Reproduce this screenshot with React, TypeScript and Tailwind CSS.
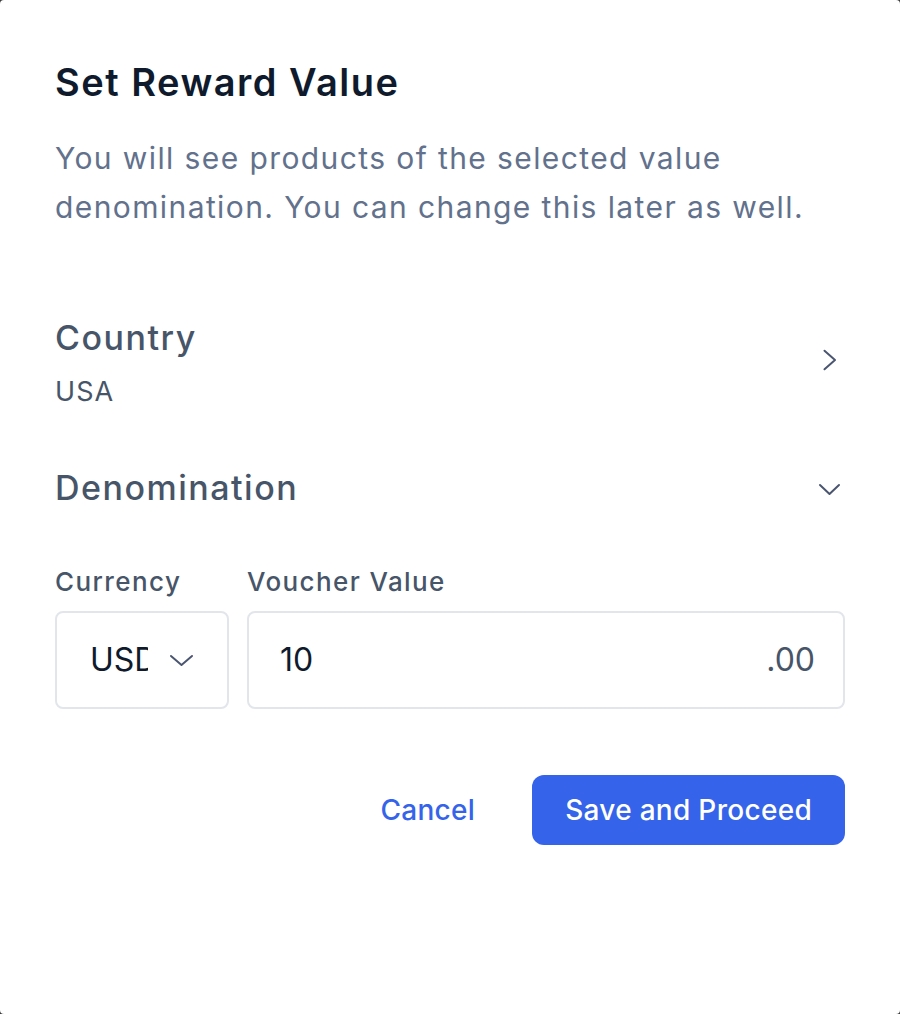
import React from 'react';

const ChevronRight = () => (
  <svg width="24" height="24" viewBox="0 0 24 24" fill="none" className="text-[#4a5670]">
    <path d="M6.5 2.7 L17 12 L6.5 21.3" stroke="currentColor" strokeWidth="2" strokeLinecap="round" strokeLinejoin="round" />
  </svg>
);

const ChevronDown = ({ w = 20, h = 12 }: { w?: number; h?: number }) => (
  <svg width={w + 4} height={h + 4} viewBox={`0 0 ${w + 4} ${h + 4}`} fill="none" className="text-[#4a5670]">
    <path d={`M2 2 L${w / 2 + 2} ${h + 1} L${w + 2} 2`} stroke="currentColor" strokeWidth="2" strokeLinecap="round" strokeLinejoin="round" />
  </svg>
);

export default function App() {
  return (
    <div className="min-h-[1014px] bg-[#3a3a3a]" style={{ fontFamily: 'Inter, "Noto Sans", sans-serif' }}>
      <div className="min-h-[1014px] bg-white rounded-[4px] px-[55px] pt-[59px]">
        <h1 className="text-[38px] leading-[46px] font-semibold text-[#0f1b2d] tracking-[1.5px]">Set Reward Value</h1>
        <p className="mt-[29px] text-[30px] leading-[49px] text-[#62718c] tracking-[1.4px]">
          You will see products of the selected value denomination. You can change this later as well.
        </p>

        <div className="mt-[86px] flex items-center justify-between">
          <div>
            <div className="text-[34px] leading-[40px] font-medium text-[#475569] tracking-[1.5px]">Country</div>
            <div className="mt-[18px] text-[27px] leading-[32px] text-[#475569] tracking-[1.1px]">USA</div>
          </div>
          <div className="mr-[3px] -mt-[6px]">
            <ChevronRight />
          </div>
        </div>

        <div className="mt-[60px] flex items-center justify-between">
          <div className="text-[34px] leading-[40px] font-medium text-[#475569] tracking-[1.5px]">Denomination</div>
          <div className="mr-[4px] mt-[4px]">
            <ChevronDown w={19} h={10} />
          </div>
        </div>

        <div className="mt-[58px] flex gap-[18px]">
          <div className="w-[174px]">
            <div className="text-[26px] leading-[32px] font-medium text-[#475569] tracking-[1.4px]">Currency</div>
            <div className="mt-[13px] h-[98px] rounded-[8px] border-2 border-[#e2e5ea] flex items-center pl-[33px]">
              <div className="w-[58px] overflow-hidden whitespace-nowrap text-[32px] leading-[40px] text-[#0f1b2d]">USD</div>
              <div className="ml-[21px] mt-[2px]">
                <ChevronDown w={21} h={10} />
              </div>
            </div>
          </div>
          <div className="flex-1">
            <div className="text-[26px] leading-[32px] font-medium text-[#475569] tracking-[1.4px]">Voucher Value</div>
            <div className="mt-[13px] h-[98px] rounded-[8px] border-2 border-[#e2e5ea] flex items-center justify-between pl-[31px] pr-[28px]">
              <span className="text-[32px] leading-[40px] text-[#0f1b2d]">10</span>
              <span className="text-[32px] leading-[40px] text-[#475569]">.00</span>
            </div>
          </div>
        </div>

        <div className="mt-[66px] flex items-center justify-end gap-[57px]">
          <button className="text-[28px] leading-[36px] font-medium text-[#3563e9] tracking-[0.3px]">Cancel</button>
          <button className="h-[70px] px-[33px] rounded-[12px] bg-[#3563e9] text-white text-[28px] leading-[36px] font-medium tracking-[0.3px]">
            Save and Proceed
          </button>
        </div>
      </div>
    </div>
  );
}
